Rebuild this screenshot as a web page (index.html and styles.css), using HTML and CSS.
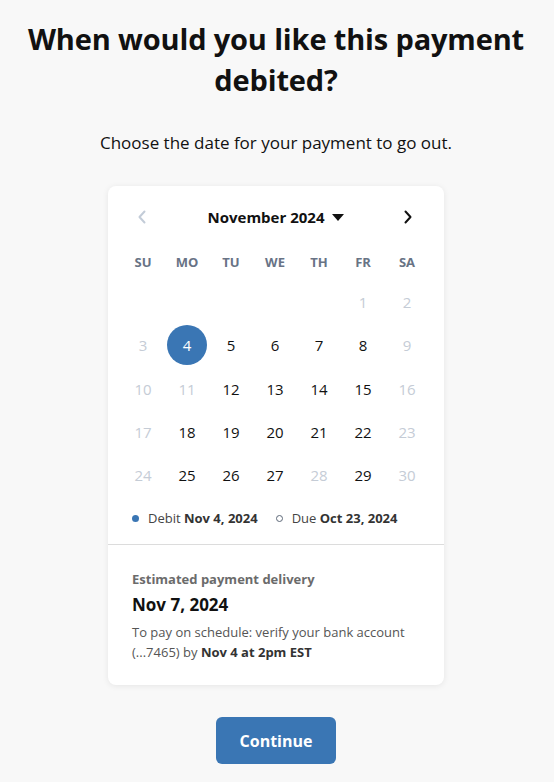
FILE: index.html
```html
<!DOCTYPE html>
<html lang="en">
<head>
<meta charset="utf-8">
<title>Payment date</title>
<link rel="stylesheet" href="styles.css">
</head>
<body>
<main class="page">
  <h1 class="title">When would you like this payment debited?</h1>
  <p class="subtitle">Choose the date for your payment to go out.</p>

  <section class="card">
    <div class="calendar">
      <div class="cal-header">
        <button class="nav nav-prev" aria-label="Previous month">
          <svg width="10" height="14" viewBox="0 0 10 14"><path d="M7.5 1.5 L2.5 7 L7.5 12.5" fill="none" stroke="#c3ccd8" stroke-width="2" stroke-linecap="round" stroke-linejoin="round"/></svg>
        </button>
        <div class="month">November 2024 <span class="caret"></span></div>
        <button class="nav nav-next" aria-label="Next month">
          <svg width="10" height="14" viewBox="0 0 10 14"><path d="M2.5 1.5 L7.5 7 L2.5 12.5" fill="none" stroke="#111" stroke-width="2" stroke-linecap="round" stroke-linejoin="round"/></svg>
        </button>
      </div>
      <div class="weekdays">
        <span>SU</span><span>MO</span><span>TU</span><span>WE</span><span>TH</span><span>FR</span><span>SA</span>
      </div>
      <div class="days">
        <span></span><span></span><span></span><span></span><span></span>
        <span class="day off">1</span><span class="day off">2</span>
        <span class="day off">3</span><span class="day selected"><i>4</i></span><span class="day">5</span><span class="day">6</span><span class="day">7</span><span class="day">8</span><span class="day off">9</span>
        <span class="day off">10</span><span class="day off">11</span><span class="day">12</span><span class="day">13</span><span class="day">14</span><span class="day">15</span><span class="day off">16</span>
        <span class="day off">17</span><span class="day">18</span><span class="day">19</span><span class="day">20</span><span class="day">21</span><span class="day">22</span><span class="day off">23</span>
        <span class="day off">24</span><span class="day">25</span><span class="day">26</span><span class="day">27</span><span class="day off">28</span><span class="day">29</span><span class="day off">30</span>
      </div>
      <div class="legend">
        <span class="legend-item"><span class="dot filled"></span><span>Debit <b>Nov 4, 2024</b></span></span>
        <span class="legend-item"><span class="dot ring"></span><span>Due <b>Oct 23, 2024</b></span></span>
      </div>
    </div>
    <div class="delivery">
      <div class="delivery-label">Estimated payment delivery</div>
      <div class="delivery-date">Nov 7, 2024</div>
      <p class="delivery-note">To pay on schedule: verify your bank account (...7465) by <b>Nov 4 at 2pm EST</b></p>
    </div>
  </section>

  <button class="continue">Continue</button>
</main>
</body>
</html>
```
FILE: styles.css
```css
html, body {
  margin: 0;
  padding: 0;
  background: #f8f8f8;
}
body {
  font-family: "Open Sans", "Noto Sans", "Liberation Sans", sans-serif;
  color: #111;
}
.page {
  display: flex;
  flex-direction: column;
  align-items: center;
  padding-top: 18px;
  padding-right: 2px;
  text-align: center;
}
.title {
  margin: 0;
  font-size: 29px;
  line-height: 41px;
  font-weight: 700;
  letter-spacing: -0.15px;
  width: 520px;
  color: #111;
}
.subtitle {
  margin: 31px 0 0;
  font-size: 17px;
  line-height: 24px;
  color: #111;
}
.card {
  margin-top: 31px;
  width: 336px;
  background: #fff;
  border-radius: 8px;
  box-shadow: 0 1px 6px rgba(0, 0, 0, 0.08);
  text-align: left;
}
.calendar {
  padding: 15px 13px 16px;
}
.cal-header {
  display: flex;
  align-items: center;
  justify-content: space-between;
  height: 32px;
  padding: 0 16px 0 14px;
}
.nav {
  border: 0;
  background: none;
  padding: 0;
  width: 14px;
  height: 32px;
  display: flex;
  align-items: center;
  justify-content: center;
}
.month {
  font-size: 15px;
  font-weight: 700;
  display: flex;
  align-items: center;
  gap: 8px;
  margin-left: 2px;
}
.caret {
  width: 0;
  height: 0;
  border-left: 6px solid transparent;
  border-right: 6px solid transparent;
  border-top: 7px solid #111;
}
.weekdays {
  display: grid;
  grid-template-columns: repeat(7, 44px);
  margin-top: 19px;
  height: 20px;
  line-height: 20px;
}
.weekdays span {
  text-align: center;
  font-size: 13px;
  font-weight: 700;
  color: #687385;
}
.days {
  display: grid;
  grid-template-columns: repeat(7, 44px);
  grid-auto-rows: 43.25px;
  margin-top: 8.5px;
}
.day {
  display: flex;
  align-items: center;
  justify-content: center;
  font-size: 15px;
  color: #111;
}
.day.off {
  color: #c5ccd6;
}
.day.selected i {
  font-style: normal;
  width: 40px;
  height: 40px;
  border-radius: 50%;
  background: #3a76b4;
  color: #fff;
  display: flex;
  align-items: center;
  justify-content: center;
}
.legend {
  display: flex;
  gap: 18px;
  margin-top: 11.5px;
  padding-left: 11px;
  font-size: 13px;
  line-height: 20px;
  color: #444;
}
.legend b {
  color: #333;
}
.legend-item {
  display: flex;
  align-items: center;
}
.dot {
  width: 7px;
  height: 7px;
  border-radius: 50%;
  margin-right: 9px;
  box-sizing: border-box;
}
.dot.filled {
  background: #3a76b4;
}
.dot.ring {
  border: 1.8px solid #5d6878;
}
.delivery {
  border-top: 1px solid #dcdcdc;
  padding: 25px 24px 23px;
}
.delivery-label {
  font-size: 13px;
  line-height: 18px;
  font-weight: 700;
  color: #6b6b6b;
}
.delivery-date {
  margin-top: 5px;
  font-size: 17px;
  line-height: 24px;
  font-weight: 700;
  color: #111;
}
.delivery-note {
  margin: 5px 0 0;
  font-size: 13px;
  line-height: 20px;
  color: #555;
}
.delivery-note b {
  color: #333;
}
.continue {
  margin-top: 32px;
  width: 120px;
  height: 47px;
  border: 0;
  border-radius: 6px;
  background: #3a76b4;
  color: #fff;
  font-family: inherit;
  font-size: 16px;
  font-weight: 700;
}
```
